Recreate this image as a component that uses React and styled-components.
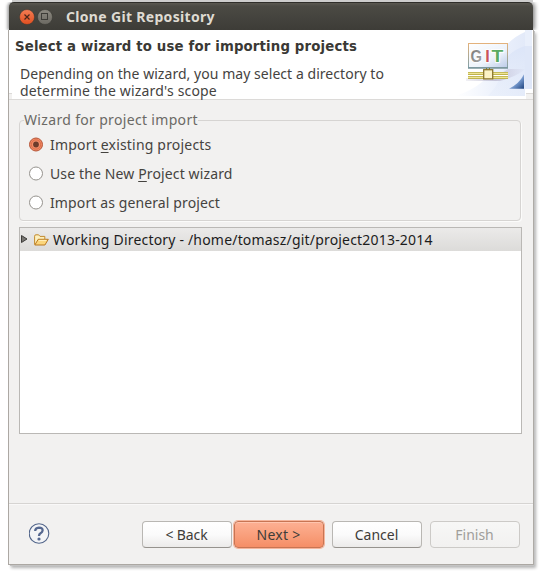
import React from "react";
import styled, { createGlobalStyle, css } from "styled-components";

const GlobalStyle = createGlobalStyle`
  * { box-sizing: border-box; }
  html, body { margin: 0; background: #fff; }
  body { font-family: "Noto Sans", "Open Sans", sans-serif; font-size: 14px; color: #45433f; }
  svg { display: block; flex: none; }
`;

const Desktop = styled.div`
  width: 558px;
  height: 587px;
  overflow: hidden;
  background: #fff;
  padding-left: 8px;
`;

const TopEdge = styled.div`
  margin-left: 4px;
  width: 521px;
  height: 2px;
  background: #cdcdcd;
`;

const TitleBar = styled.header`
  display: flex;
  align-items: center;
  gap: 2px;
  width: 524px;
  height: 28px;
  margin-left: 1px;
  padding-left: 10px;
  border-radius: 5px 5px 0 0;
  border-top: 1px solid #2f2e2a;
  background: linear-gradient(#5a5851, #4b4a44 12%, #3d3c37);
  box-shadow: -2px 0 3px rgba(0, 0, 0, 0.3), 2px 0 4px rgba(0, 0, 0, 0.45);
  clip-path: inset(0 -8px 0 -5px);
`;

const Title = styled.h1`
  margin: 0 0 0 11px;
  font-size: 14px;
  line-height: 20px;
  font-weight: 700;
  color: #dfdbd2;
  white-space: nowrap;
  letter-spacing: 0.32px;
`;

const Body = styled.main`
  width: 525px;
  height: 535px;
  display: flex;
  flex-direction: column;
  border: solid #aca8a3;
  border-width: 0 0 1px 1px;
  background: #f2f1f0;
  box-shadow: 1px 0 0 #aeaba6, 2px 1px 0 #c4c4c4, 3px 3px 3px rgba(0, 0, 0, 0.3);
`;

const Banner = styled.section`
  display: flex;
  justify-content: space-between;
  height: 70px;
  flex: none;
  border-bottom: 1px solid #dcdad8;
  background:
    linear-gradient(#dcdad8 1px, #f2f1f0 1px) left bottom / 3px 6px no-repeat,
    linear-gradient(#dcdad8 1px, #f2f1f0 1px) right bottom / 7px 6px no-repeat,
    #fff;
`;

const BannerText = styled.div`
  padding: 8px 0 0 6px;
`;

const Heading = styled.h2`
  margin: 0 0 9px;
  font: 700 13.3px/18px "DejaVu Sans", sans-serif;
  color: #3a3935;
  white-space: nowrap;
  letter-spacing: 0.15px;
`;

const Line = styled.div`
  height: 17px;
  line-height: 17px;
  padding-left: 5px;
  white-space: nowrap;
  letter-spacing: ${(p) => p.$spacing}px;
`;

const Content = styled.section`
  flex: 1;
  padding: 10px 10px 0;
`;

const Group = styled.fieldset`
  min-width: 0;
  margin: 0;
  padding: 0 0 0 9px;
  border: 1px solid #d6d4d2;
  border-radius: 4px;
  height: 111px;
  width: 502px;
  box-shadow: 1px 1px 0 #fbfbfa;
`;

const Legend = styled.legend`
  margin-left: -5px;
  padding: 0;
  height: 20px;
  line-height: 19px;
  color: #6b6965;
  white-space: nowrap;
  letter-spacing: 0.33px;
`;

const Options = styled.div`
  height: 88px;
`;

const Option = styled.label`
  display: flex;
  align-items: center;
  gap: 7px;
  height: 29px;
  white-space: nowrap;
  letter-spacing: ${(p) => p.$spacing}px;
  u { text-underline-offset: 2px; }
`;

const Tree = styled.div`
  margin-top: 6px;
  width: 503px;
  height: 207px;
  border: 1px solid #bab8b5;
  background: #fff;
`;

const TreeRow = styled.div`
  display: flex;
  align-items: center;
  height: 23px;
  color: #1c1c1c;
  background: linear-gradient(#ebeae9, #dcdbd9);
  white-space: nowrap;
  letter-spacing: 0.19px;
`;

const TreeLabel = styled.span`
  margin-left: 4px;
`;

const Footer = styled.footer`
  display: flex;
  height: 61px;
  flex: none;
  padding: 17px 0 0 20px;
  border-top: 1px solid #d6d4d2;
  box-shadow: inset 0 1px 0 #f9f8f8;
`;

const HelpButton = styled.span`
  margin-top: 2px;
`;

const Buttons = styled.div`
  display: flex;
  gap: ${(p) => p.$gap}px;
  margin-left: ${(p) => p.$left}px;
`;

const Button = styled.button`
  width: 90px;
  height: 27px;
  padding: 0 1px 1px 0;
  font: inherit;
  color: #3f3d39;
  letter-spacing: ${(p) => p.$spacing || 0}px;
  border: 1px solid #b9b7b3;
  border-bottom-color: #96938e;
  border-radius: 4px;
  background: linear-gradient(#ffffff, #fbfbfb 50%, #ecebea);
  ${(p) =>
    p.$primary &&
    css`
      border-color: #c87553;
      background: linear-gradient(#fdb093, #f9a07d 50%, #f58e66);
      box-shadow: inset 0 1px 0 #ffc5ae, 0 0 0 1px #f5b59c;
    `}
  &:disabled {
    color: #a09e9a;
    border-color: #cccac7;
    background: linear-gradient(#f7f7f6, #f2f1f0);
  }
`;

function CloseIcon() {
  return (
    <svg width="16" height="16" viewBox="0 0 16 16">
      <defs>
        <linearGradient id="close" x1="0" y1="0" x2="0" y2="1">
          <stop offset="0" stopColor="#f47d54" />
          <stop offset="1" stopColor="#e04f20" />
        </linearGradient>
      </defs>
      <circle cx="8" cy="8" r="7.5" fill="url(#close)" stroke="#35342f" strokeWidth=".5" />
      <path d="M5.5 5.5l5 5M10.5 5.5l-5 5" stroke="#4b261a" strokeWidth="1.2" />
    </svg>
  );
}

function MaximizeIcon() {
  return (
    <svg width="16" height="16" viewBox="0 0 16 16">
      <defs>
        <linearGradient id="max" x1="0" y1="0" x2="0" y2="1">
          <stop offset="0" stopColor="#8c8980" />
          <stop offset="1" stopColor="#6b6962" />
        </linearGradient>
      </defs>
      <circle cx="8" cy="8" r="7.5" fill="url(#max)" stroke="#35342f" strokeWidth=".5" />
      <rect x="4.5" y="4.5" width="6" height="6" fill="none" stroke="#3d3c37" />
    </svg>
  );
}

function GitBanner() {
  return (
    <svg width="84" height="66" viewBox="449 30 84 66">
      <defs>
        <linearGradient id="haze" x1="0" y1="0" x2="1" y2="0">
          <stop offset="0" stopColor="#eef3fd" stopOpacity="0" />
          <stop offset=".55" stopColor="#edf2fc" />
          <stop offset="1" stopColor="#e3eaf9" />
        </linearGradient>
        <linearGradient id="swoosh" x1="0" y1="0" x2="0" y2="1">
          <stop offset="0" stopColor="#dce5f8" />
          <stop offset="1" stopColor="#e6edfa" stopOpacity=".4" />
        </linearGradient>
        <linearGradient id="shade" x1="0" y1="0" x2="1" y2="0">
          <stop offset="0" stopColor="#b9b6cc" stopOpacity=".2" />
          <stop offset=".5" stopColor="#b9b6cc" stopOpacity=".75" />
          <stop offset="1" stopColor="#c9c8e0" stopOpacity=".1" />
        </linearGradient>
        <linearGradient id="frame" x1="0" y1="0" x2="0" y2="1">
          <stop offset="0" stopColor="#e3b27c" />
          <stop offset="1" stopColor="#80a0a8" />
        </linearGradient>
        <linearGradient id="board" x1="0" y1="0" x2="1" y2="1">
          <stop offset="0" stopColor="#fff" />
          <stop offset=".6" stopColor="#edf3fb" />
          <stop offset="1" stopColor="#bccbe8" />
        </linearGradient>
        <linearGradient id="corner" x1="0" y1="0" x2="1" y2="1">
          <stop offset=".35" stopColor="#c3d3ee" />
          <stop offset=".6" stopColor="#6f93c8" />
          <stop offset="1" stopColor="#1e437e" />
        </linearGradient>
        <linearGradient id="bar" x1="0" y1="0" x2="0" y2="1">
          <stop offset="0" stopColor="#b0a53a" />
          <stop offset=".5" stopColor="#efe594" />
          <stop offset="1" stopColor="#a79b2e" />
        </linearGradient>
        <linearGradient id="grey" x1="0" y1="0" x2="1" y2="1">
          <stop offset="0" stopColor="#777" />
          <stop offset="1" stopColor="#aaa" />
        </linearGradient>
      </defs>
      <path d="M455 96Q488 86 497 60Q506 40 525 32V96Z" fill="url(#haze)" />
      <path d="M508 56Q515 49 525 46V96H488Q503 80 508 56Z" fill="url(#swoosh)" />
      <path d="M525 30H532V46H525Z" fill="#e9effb" />
      <path d="M525 46H532V89H525Z" fill="#dfe7f8" />
      <path d="M492 80L508 69H525Q518 76 500 81H466V78Z" fill="url(#shade)" />
      <rect x="468.5" y="43.5" width="39" height="24" fill="url(#board)" stroke="url(#frame)" />
      <path d="M468 68H508" stroke="#7b969c" strokeWidth="1.6" />
      <rect x="468" y="72" width="40" height="3" fill="url(#bar)" />
      <path d="M468 75.5H508" stroke="#fff" />
      <rect x="468" y="76" width="40" height="3" fill="url(#bar)" />
      <path d="M486.5 68V71M489.5 68V71" stroke="#857b33" />
      <rect x="483.7" y="69.7" width="9" height="9.2" fill="#fcf3c5" stroke="#8b762c" strokeWidth="1.3" />
      <g fontFamily="Liberation Sans, sans-serif" fontSize="16" fontWeight="700" stroke="#fff" strokeWidth="1.6" paintOrder="stroke">
        <text x="470.5" y="62" textLength="11.5" lengthAdjust="spacingAndGlyphs" fill="url(#grey)">G</text>
        <text x="485.2" y="62" fill="#c8545b">I</text>
        <text x="491.4" y="62" textLength="11.8" lengthAdjust="spacingAndGlyphs" fill="#5bab62">T</text>
      </g>
      <path d="M509 88.7Q519 84 524 74.3V88.7Z" fill="url(#corner)" />
    </svg>
  );
}

function Radio({ checked }) {
  return (
    <svg width="14" height="15" viewBox="0 0 14 15">
      <circle cx="7" cy="7.5" r="6.5" fill={checked ? "#f08763" : "#fff"} stroke={checked ? "#b65638" : "#96938e"} strokeWidth="1" />
      {checked && <circle cx="7" cy="7.5" r="4.6" fill="#f58f6b" stroke="#d56743" strokeWidth=".8" />}
      {checked && <circle cx="7" cy="7.5" r="2.9" fill="#6e3c2b" />}
    </svg>
  );
}

function Expander() {
  return (
    <svg width="14" height="12" viewBox="0 0 14 12">
      <path d="M1.5 1.5L7 5L1.5 8.5Z" fill="#777571" stroke="#3e3d3a" strokeWidth="1" />
    </svg>
  );
}

function FolderIcon() {
  return (
    <svg width="15" height="12" viewBox="0 0 15 12">
      <path d="M.6 10.5V2.2Q.6 .8 2 .8H4.6L6 2.4H10.8V5" fill="#fdf0bd" stroke="#c28a2e" />
      <path d="M.8 11L4.2 5.3H14.3L10.9 11Z" fill="#fbd67c" stroke="#b9781f" />
      <path d="M4.8 6.4H12.4" stroke="#fff0bd" />
    </svg>
  );
}

function HelpIcon() {
  return (
    <svg width="21" height="21" viewBox="0 0 21 21">
      <circle cx="10" cy="10.5" r="9.8" fill="#f3f4f6" stroke="#52658a" strokeWidth="1.1" />
      <path d="M6.2 8.1Q6.2 4.8 10 4.6Q13.8 4.7 13.6 7.5Q13.5 9 11.5 10.3Q10 11.2 10 13" fill="none" stroke="#566890" strokeWidth="2.3" />
      <circle cx="10" cy="16" r="1.6" fill="#566890" />
    </svg>
  );
}

export default function App() {
  return (
    <>
      <GlobalStyle />
      <Desktop>
        <TopEdge />
        <TitleBar>
          <CloseIcon />
          <MaximizeIcon />
          <Title>Clone Git Repository</Title>
        </TitleBar>
        <Body>
          <Banner>
            <BannerText>
              <Heading>Select a wizard to use for importing projects</Heading>
              <Line $spacing={0.045}>Depending on the wizard, you may select a directory to</Line>
              <Line $spacing={0.175}>determine the wizard's scope</Line>
            </BannerText>
            <GitBanner />
          </Banner>
          <Content>
            <Group>
              <Legend>Wizard for project import</Legend>
              <Options>
                <Option $spacing={0.19}>
                  <Radio checked />
                  <span>Import <u>e</u>xisting projects</span>
                </Option>
                <Option $spacing={0.13}>
                  <Radio />
                  <span>Use the New <u>P</u>roject wizard</span>
                </Option>
                <Option $spacing={0.115}>
                  <Radio />
                  <span>Import as general project</span>
                </Option>
              </Options>
            </Group>
            <Tree>
              <TreeRow>
                <Expander />
                <FolderIcon />
                <TreeLabel>Working Directory - /home/tomasz/git/project2013-2014</TreeLabel>
              </TreeRow>
            </Tree>
          </Content>
          <Footer>
            <HelpButton>
              <HelpIcon />
            </HelpButton>
            <Buttons $left={92} $gap={2}>
              <Button $spacing={-0.13}>&lt; Back</Button>
              <Button $primary $spacing={0.25}>Next &gt;</Button>
            </Buttons>
            <Buttons $left={8} $gap={8}>
              <Button>Cancel</Button>
              <Button disabled>Finish</Button>
            </Buttons>
          </Footer>
        </Body>
      </Desktop>
    </>
  );
}
